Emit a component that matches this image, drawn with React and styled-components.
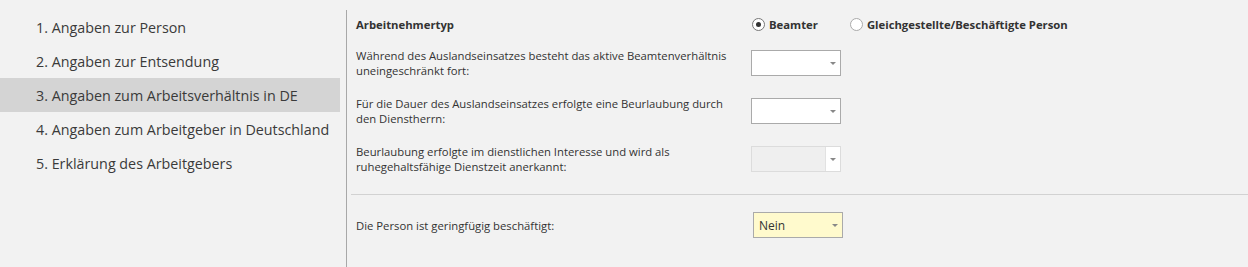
import React from "react";
import styled, { createGlobalStyle } from "styled-components";

const Global = createGlobalStyle`
  html, body { margin: 0; padding: 0; background: #f2f2f2; }
  body { font-family: "Open Sans", "Liberation Sans", sans-serif; color: #333; }
`;

const Page = styled.div`
  display: flex;
  min-height: 267px;
  background: #f2f2f2;
`;

const Sidebar = styled.nav`
  width: 340px;
  padding-top: 10px;
  margin-right: 6px;
  display: flex;
  flex-direction: column;
`;

const NavItem = styled.div`
  height: 34px;
  display: flex;
  align-items: center;
  padding-left: 36px;
  font-size: 14.3px;
  color: #3a3a3a;
  background: ${(p) => (p.$active ? "#d4d4d4" : "transparent")};
`;

const Main = styled.main`
  flex: 1;
  margin-top: 10px;
  border-left: 1px solid #a8a8a8;
  padding-left: 4px;
  padding-top: 4px;
`;

const Section = styled.div`
  padding-left: 5px;
  display: grid;
  grid-template-columns: 395px 1fr;
  align-items: center;
  row-gap: 18px;
  font-size: 11.3px;
`;

const HeadRow = styled.div`
  height: 20px;
  display: flex;
  align-items: center;
  font-weight: 700;
  margin-bottom: -4px;
`;

const Label = styled.div`
  line-height: 15px;
`;

const RadioGroup = styled.div`
  height: 20px;
  display: flex;
  align-items: center;
  gap: 32px;
  padding-left: 1px;
  margin-bottom: -4px;
`;

const RadioOption = styled.label`
  display: flex;
  align-items: center;
  gap: 4px;
  font-weight: 700;
`;

const RadioCircle = styled.span`
  width: 11px;
  height: 11px;
  border-radius: 50%;
  border: 1px solid ${(p) => (p.$checked ? "#777" : "#aaa")};
  background: #fff;
  display: flex;
  align-items: center;
  justify-content: center;
  &::after {
    content: "";
    width: 5px;
    height: 5px;
    border-radius: 50%;
    background: ${(p) => (p.$checked ? "#333" : "transparent")};
  }
`;

const Select = styled.div`
  width: 88px;
  height: 24px;
  margin-left: ${(p) => p.$shift || 0}px;
  border: 1px solid ${(p) => (p.$disabled ? "#dcdcdc" : "#aaa")};
  background: ${(p) => p.$bg || "#fff"};
  display: flex;
  align-items: stretch;
  font-size: 12px;
`;

const SelectValue = styled.div`
  flex: 1;
  display: flex;
  align-items: center;
  padding-left: 5px;
  color: #333;
`;

const ArrowBox = styled.div`
  width: 14px;
  display: flex;
  align-items: center;
  justify-content: center;
  background: ${(p) => (p.$disabled ? "#fff" : "transparent")};
  border-left: ${(p) => (p.$disabled ? "1px solid #e2e2e2" : "none")};
  &::after {
    content: "";
    border-left: 3px solid transparent;
    border-right: 3px solid transparent;
    border-top: 3px solid #888;
  }
`;

const Divider = styled.hr`
  border: none;
  border-top: 1px solid #d2d2d2;
  margin: 20px 0 17px 0;
`;

const Dropdown = ({ value, bg, disabled, shift }) => (
  <Select $bg={bg} $disabled={disabled} $shift={shift}>
    <SelectValue>{value}</SelectValue>
    <ArrowBox $disabled={disabled} />
  </Select>
);

const navItems = [
  "1. Angaben zur Person",
  "2. Angaben zur Entsendung",
  "3. Angaben zum Arbeitsverhältnis in DE",
  "4. Angaben zum Arbeitgeber in Deutschland",
  "5. Erklärung des Arbeitgebers",
];

export default function App() {
  return (
    <>
      <Global />
      <Page>
        <Sidebar>
          {navItems.map((item, i) => (
            <NavItem key={item} $active={i === 2}>
              {item}
            </NavItem>
          ))}
        </Sidebar>
        <Main>
          <Section>
            <HeadRow>Arbeitnehmertyp</HeadRow>
            <RadioGroup>
              <RadioOption>
                <RadioCircle $checked />
                Beamter
              </RadioOption>
              <RadioOption>
                <RadioCircle />
                Gleichgestellte/Beschäftigte Person
              </RadioOption>
            </RadioGroup>

            <Label>
              Während des Auslandseinsatzes besteht das aktive Beamtenverhältnis
              <br />
              uneingeschränkt fort:
            </Label>
            <Dropdown />

            <Label>
              Für die Dauer des Auslandseinsatzes erfolgte eine Beurlaubung durch
              <br />
              den Dienstherrn:
            </Label>
            <Dropdown />

            <Label>
              Beurlaubung erfolgte im dienstlichen Interesse und wird als
              <br />
              ruhegehaltsfähige Dienstzeit anerkannt:
            </Label>
            <Dropdown disabled bg="#efefef" />
          </Section>
          <Divider />
          <Section>
            <Label>Die Person ist geringfügig beschäftigt:</Label>
            <Dropdown value="Nein" bg="#fffacd" shift={2} />
          </Section>
        </Main>
      </Page>
    </>
  );
}
